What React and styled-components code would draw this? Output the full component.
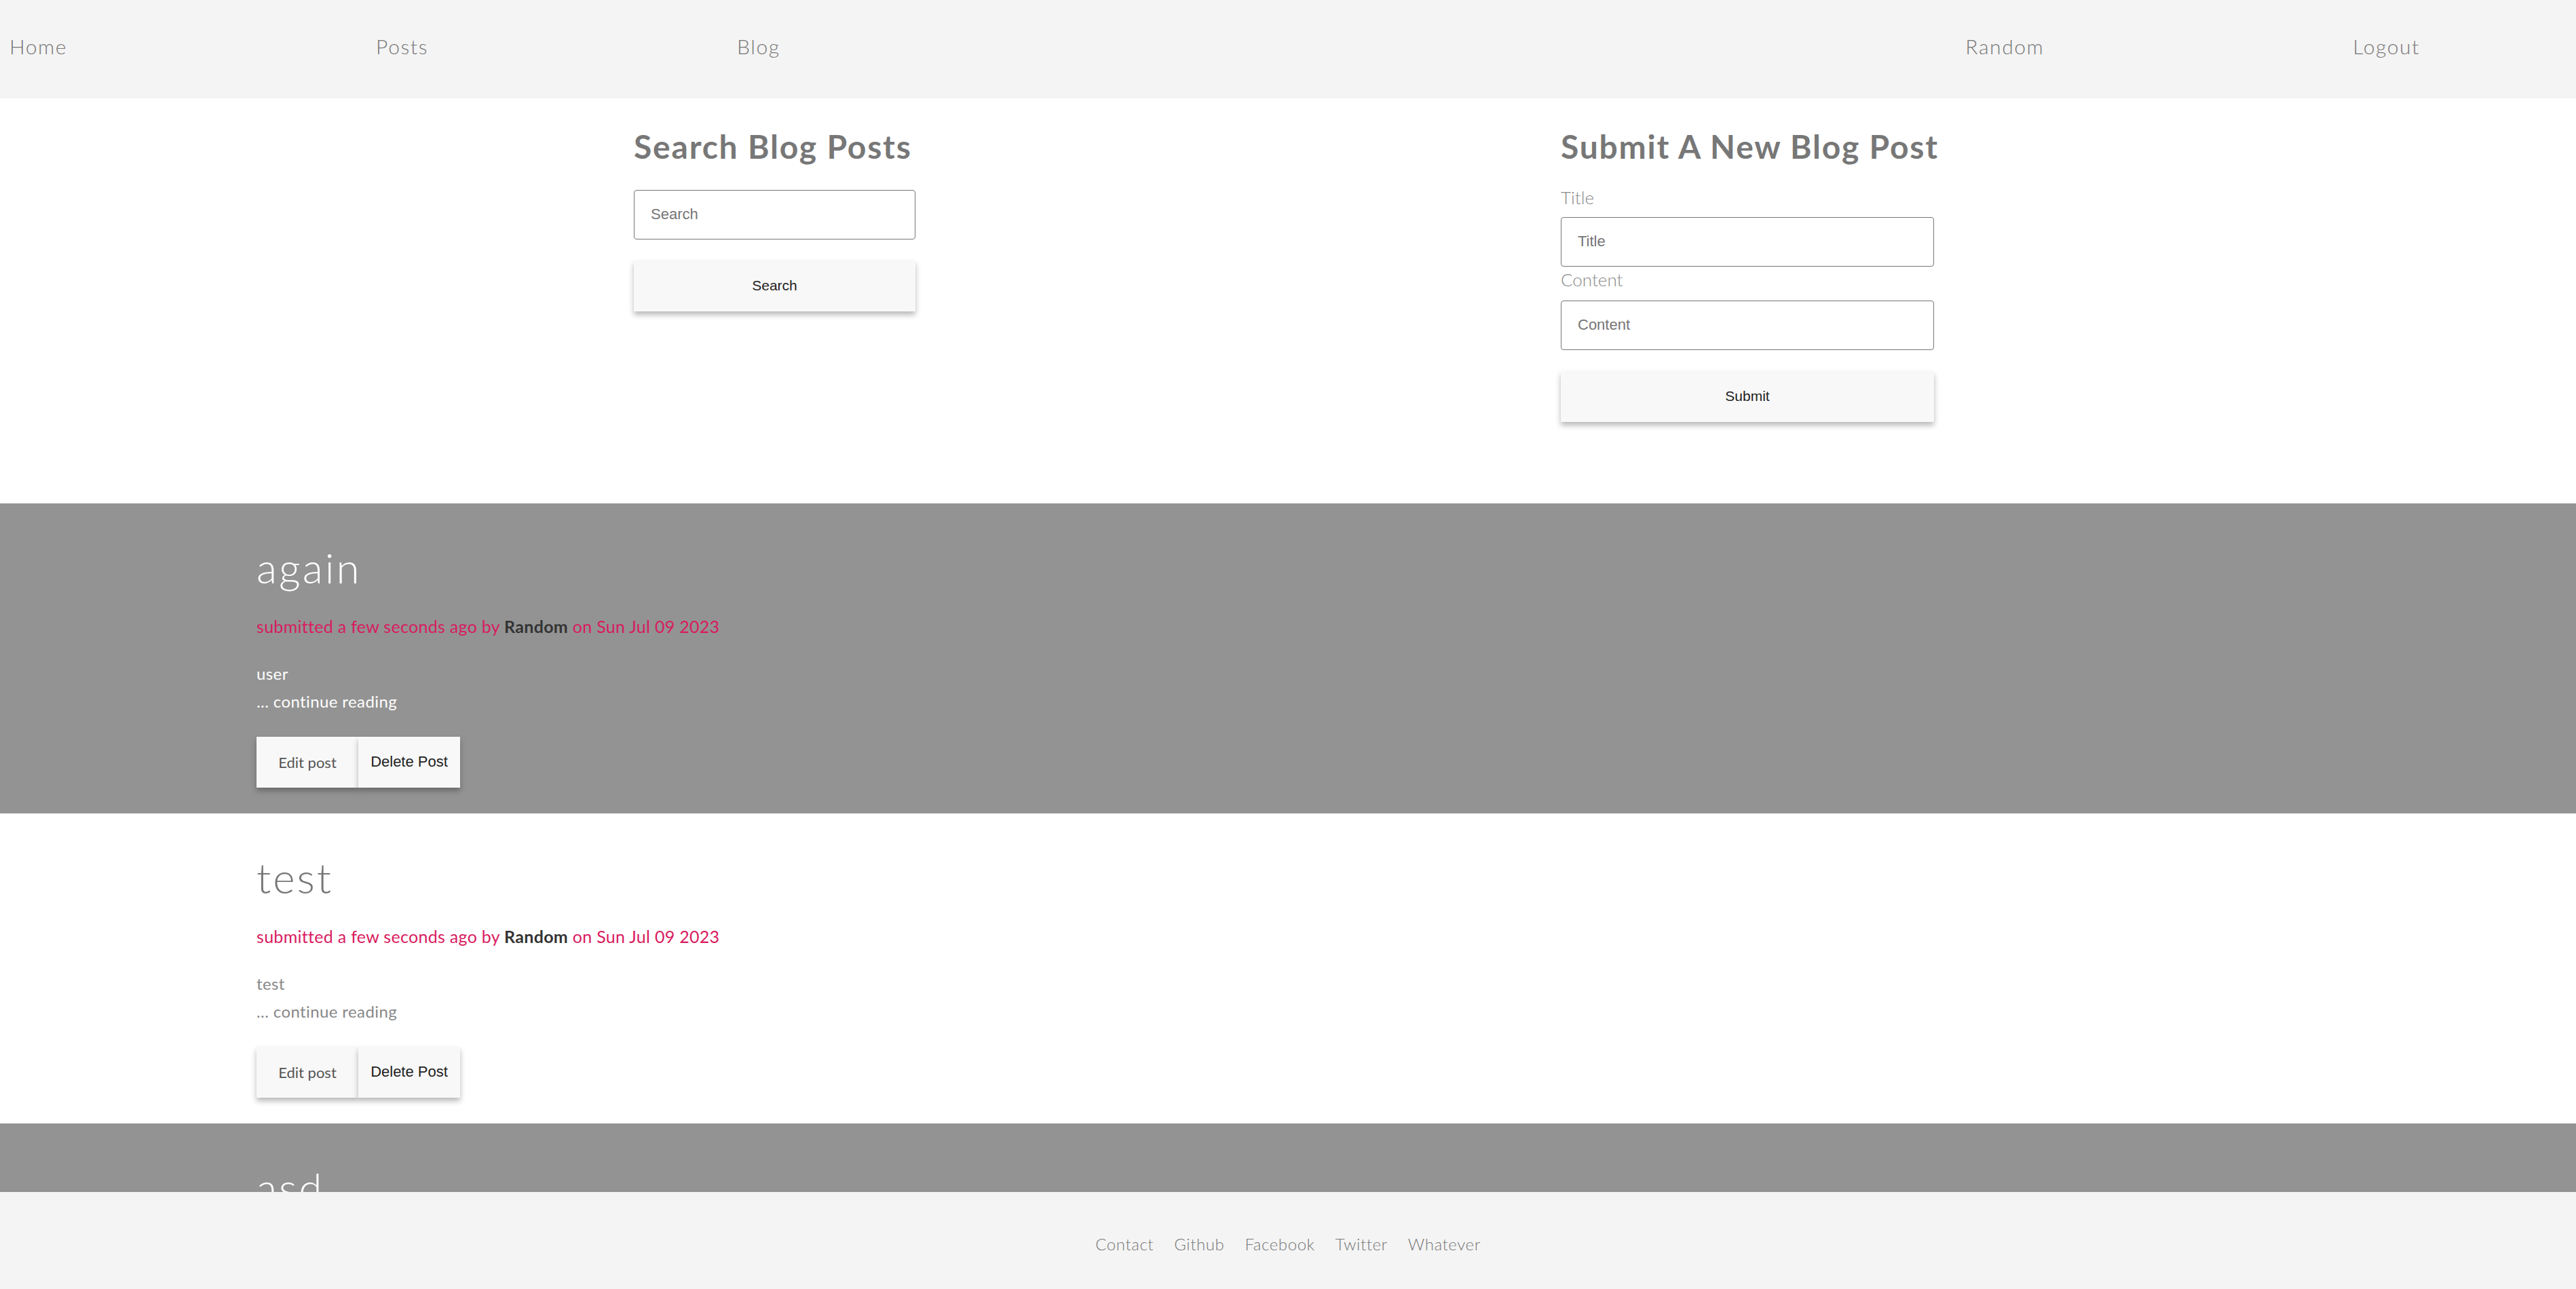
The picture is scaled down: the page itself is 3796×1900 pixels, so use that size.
import React from "react";
import styled, { createGlobalStyle } from "styled-components";

const GlobalStyle = createGlobalStyle`
    html, body {
        margin: 0;
        padding: 0;
        background: #fff;
        font-family: Lato, "Open Sans", sans-serif;
    }
    * {
        box-sizing: border-box;
    }
`;

const posts = [
    { title: "again", body: "user", dark: true },
    { title: "test", body: "test", dark: false },
    { title: "asd", body: "asd", dark: true },
];

const footerLinks = ["Contact", "Github", "Facebook", "Twitter", "Whatever"];

export default function App() {
    return (
        <Page>
            <GlobalStyle />
            <Nav>
                <NavGroup>
                    <NavLink>Home</NavLink>
                    <NavLink>Posts</NavLink>
                    <NavLink>Blog</NavLink>
                </NavGroup>
                <NavGroup>
                    <NavLink>Random</NavLink>
                    <NavLink>Logout</NavLink>
                </NavGroup>
            </Nav>
            <Scroll>
                <Forms>
                    <Column width={415}>
                        <Heading>Search Blog Posts</Heading>
                        <Input placeholder="Search" top={35} />
                        <Button>Search</Button>
                    </Column>
                    <Column width={550}>
                        <Heading>Submit A New Blog Post</Heading>
                        <Label top={31}>Title</Label>
                        <Input placeholder="Title" top={13} />
                        <Label top={4}>Content</Label>
                        <Input placeholder="Content" top={15} />
                        <Button>Submit</Button>
                    </Column>
                </Forms>
                {posts.map((post) => (
                    <Post key={post.title} dark={post.dark}>
                        <PostTitle dark={post.dark}>{post.title}</PostTitle>
                        <Meta>
                            submitted a few seconds ago by <Author>Random</Author> on Sun Jul 09 2023
                        </Meta>
                        <Body dark={post.dark}>{post.body}</Body>
                        <More dark={post.dark}>... continue reading</More>
                        <Actions>
                            <EditButton>Edit post</EditButton>
                            <DeleteButton>Delete Post</DeleteButton>
                        </Actions>
                    </Post>
                ))}
            </Scroll>
            <Footer>
                {footerLinks.map((link) => (
                    <FooterLink key={link}>{link}</FooterLink>
                ))}
            </Footer>
        </Page>
    );
}

const Page = styled.div`
    height: 100vh;
    display: flex;
    flex-direction: column;
    overflow: hidden;
`;

const Nav = styled.nav`
    height: 145px;
    flex-shrink: 0;
    display: flex;
    justify-content: space-between;
    align-items: center;
    padding: 0 230px 10px 14px;
    background-color: #f4f4f4;
`;

const NavGroup = styled.div`
    display: flex;
    gap: 455px;
`;

const NavLink = styled.a`
    font-size: 30px;
    font-weight: 300;
    letter-spacing: 1.6px;
    color: #777;
    cursor: pointer;
`;

const Scroll = styled.main`
    flex: 1;
    overflow: hidden;
`;

const Forms = styled.section`
    display: flex;
    justify-content: space-between;
    margin: 0 946px 0 934px;
    padding: 42px 0 0;
    height: 597px;
`;

const Column = styled.div`
    width: ${(props) => props.width}px;
    display: flex;
    flex-direction: column;
`;

const Heading = styled.h2`
    margin: 0;
    font-size: 48px;
    line-height: 1.2;
    font-weight: 700;
    letter-spacing: 1.8px;
    color: #777;
    white-space: nowrap;
`;

const Label = styled.label`
    margin-top: ${(props) => props.top}px;
    font-size: 26px;
    line-height: 1.2;
    font-weight: 300;
    color: #888;
`;

const Input = styled.input`
    margin-top: ${(props) => props.top}px;
    height: 73px;
    width: 100%;
    border: 1px solid #767676;
    border-radius: 4px;
    padding: 0 24px;
    font-family: "Liberation Sans", Arial, sans-serif;
    font-size: 22px;
    color: #333;
    &::placeholder {
        color: #757575;
    }
`;

const Button = styled.button`
    margin-top: 31px;
    height: 75px;
    width: 100%;
    border: none;
    background-color: #f8f8f8;
    box-shadow: 0 5px 8px rgba(0, 0, 0, 0.28);
    font-family: "Liberation Sans", Arial, sans-serif;
    font-size: 21px;
    color: #222;
    cursor: pointer;
`;

const Post = styled.article`
    height: 457px;
    flex-shrink: 0;
    padding: 57px 378px 0;
    background-color: ${(props) => (props.dark ? "#939393" : "#fff")};
`;

const PostTitle = styled.h1`
    margin: 0;
    font-size: 62px;
    line-height: 1.2;
    font-weight: 300;
    letter-spacing: 3px;
    color: ${(props) => (props.dark ? "#fff" : "#777")};
`;

const Meta = styled.p`
    margin: 35px 0 0;
    font-size: 25px;
    line-height: 1.2;
    font-weight: 400;
    letter-spacing: 0.3px;
    color: #d81b60;
`;

const Author = styled.span`
    font-weight: 700;
    color: #333;
`;

const Body = styled.p`
    margin: 41px 0 0;
    font-size: 24px;
    line-height: 1.2;
    font-weight: 400;
    letter-spacing: 0.4px;
    color: ${(props) => (props.dark ? "#fff" : "#888")};
`;

const More = styled(Body)`
    margin-top: 12px;
`;

const Actions = styled.div`
    display: flex;
    margin-top: 37px;
`;

const ActionButton = styled.button`
    width: 150px;
    height: 75px;
    border: none;
    background-color: #f8f8f8;
    box-shadow: 0 5px 8px rgba(0, 0, 0, 0.28);
    font-size: 22px;
    cursor: pointer;
`;

const EditButton = styled(ActionButton)`
    font-family: Lato, "Open Sans", sans-serif;
    font-weight: 400;
    color: #555;
`;

const DeleteButton = styled(ActionButton)`
    font-family: "Liberation Sans", Arial, sans-serif;
    color: #222;
`;

const Footer = styled.footer`
    height: 143px;
    flex-shrink: 0;
    display: flex;
    justify-content: center;
    align-items: center;
    gap: 30px;
    padding-top: 10px;
    background-color: #f4f4f4;
`;

const FooterLink = styled.a`
    font-size: 24px;
    font-weight: 300;
    letter-spacing: 0.6px;
    color: #777;
    cursor: pointer;
`;
